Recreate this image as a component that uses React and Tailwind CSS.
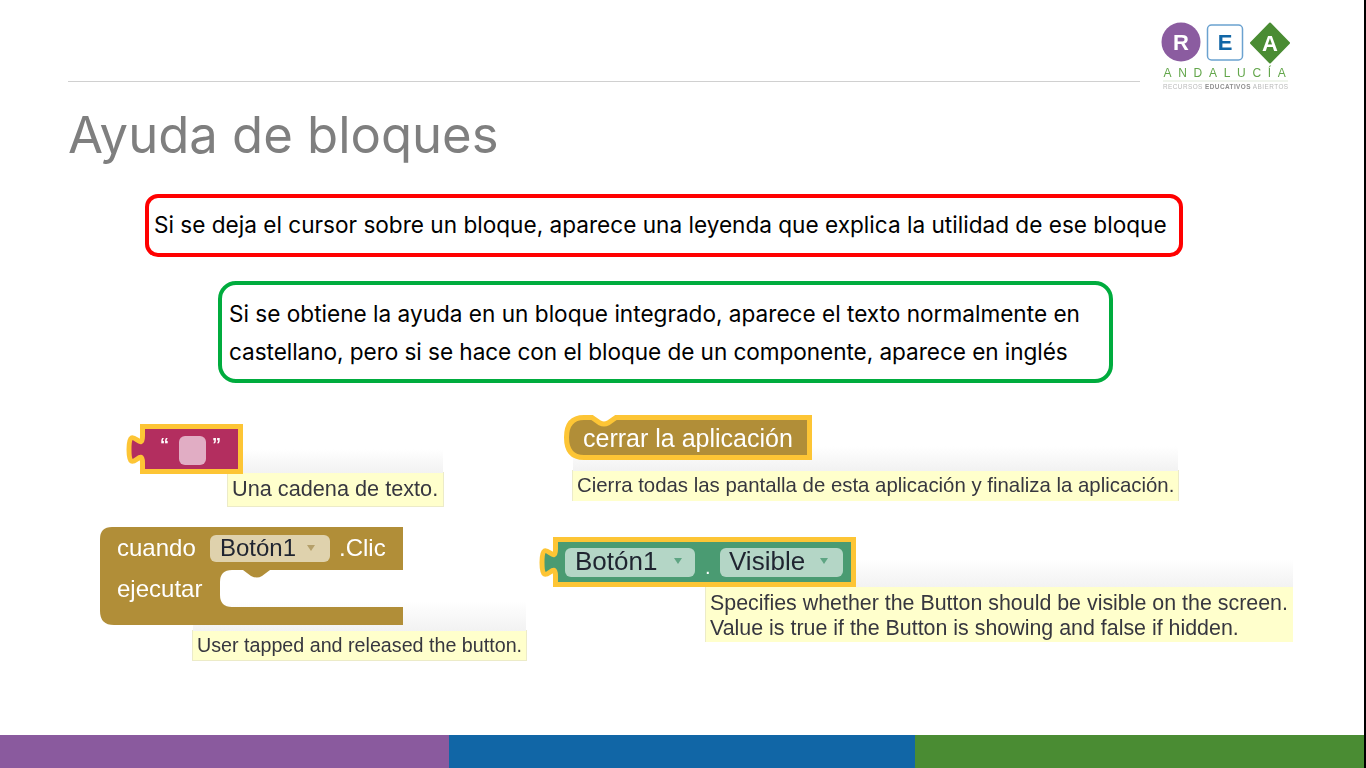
const ARIAL = { fontFamily: '"Liberation Sans", Arial, sans-serif' };

function Tooltip({ className, textClass, shadowClass, children }) {
  return (
    <div className={`relative font-['Liberation_Sans',sans-serif] bg-[#ffffcc] border border-[#ecebc8] text-[#37373f] whitespace-nowrap blur-[0.3px] ${className} ${textClass}`}>
      <div className={`absolute bottom-full bg-gradient-to-b from-white to-[#f2f2f2] ${shadowClass}`} />
      {children}
    </div>
  );
}

function Arrow({ x, y, fill }) {
  return <path d={`M${x - 4} ${y - 3} H${x + 4} L${x} ${y + 3} Z`} fill={fill} />;
}

function TextBlock() {
  return (
    <svg width="118" height="51" viewBox="0 0 118 51" className="relative z-10 block blur-[0.3px]">
      <path
        d="M16.5 2.5 H114.5 V47.5 H16.5 V39 c0,-18 -13.5,14.4 -13.5,-13.5 s13.5,4.5 13.5,-13.5 Z"
        fill="#b32e5f"
        stroke="#fdc535"
        strokeWidth="5"
      />
      <rect x="53" y="12" width="27" height="29" rx="6" fill="#e1adc4" />
      <text x="34" y="27" fontSize="18" fontWeight="700" fill="#fff" style={ARIAL}>“</text>
      <text x="86" y="27" fontSize="18" fontWeight="700" fill="#fff" style={ARIAL}>”</text>
    </svg>
  );
}

function EventBlock() {
  return (
    <svg width="303" height="98" viewBox="0 0 303 98" className="relative z-10 block blur-[0.3px]">
      <path
        d="M12 0 H303 V43 H170 L162 49 Q157 52 151 49 L143 43 H132 Q120 43 120 55 V68 Q120 80 132 80 H303 V98 H14 Q0 98 0 84 V12 Q0 0 12 0 Z"
        fill="#b18e38"
      />
      <rect x="110" y="8" width="120" height="27" rx="6" fill="#dfd2ad" />
      <g fontSize="24" style={ARIAL}>
        <text x="17" y="29" fill="#fff">cuando</text>
        <text x="120" y="29" fill="#1f2430">Botón1</text>
        <text x="239" y="29" fill="#fff">.Clic</text>
        <text x="17" y="70" fill="#fff">ejecutar</text>
      </g>
      <Arrow x={211} y={21} fill="#b5a06a" />
    </svg>
  );
}

function CloseBlock() {
  return (
    <svg width="248" height="46" viewBox="0 0 248 46" className="relative z-10 block blur-[0.3px]">
      <path
        d="M20 2.5 H28 L36 8 Q40 10 44 8 L52 2.5 H245.5 V42.5 H20 Q2.5 42.5 2.5 22.5 Q2.5 2.5 20 2.5 Z"
        fill="#b18e38"
        stroke="#fdc535"
        strokeWidth="5"
      />
      <text x="19" y="32" fontSize="25" fill="#fff" style={ARIAL}>cerrar la aplicación</text>
    </svg>
  );
}

function VisibleBlock() {
  return (
    <svg width="318" height="50" viewBox="0 0 318 50" className="relative z-10 block blur-[0.3px]">
      <path
        d="M17.5 2.5 H315.5 V47.5 H17.5 V39 c0,-18 -13.5,14.4 -13.5,-13.5 s13.5,4.5 13.5,-13.5 Z"
        fill="#4a9b72"
        stroke="#fdc535"
        strokeWidth="5"
      />
      <rect x="27" y="11" width="130" height="29" rx="6" fill="#b4d6c6" />
      <rect x="182" y="11" width="123" height="29" rx="6" fill="#b4d6c6" />
      <g fontSize="26" fill="#1f2430" style={ARIAL}>
        <text x="37" y="33">Botón1</text>
        <text x="191" y="33">Visible</text>
      </g>
      <text x="167" y="37" fontSize="20" fill="#fff" style={ARIAL}>.</text>
      <Arrow x={140} y={24} fill="#5ea583" />
      <Arrow x={286} y={24} fill="#5ea583" />
    </svg>
  );
}

function Logo() {
  return (
    <svg width="132" height="74" viewBox="0 0 132 74" className="block shrink-0 blur-[0.3px]" style={ARIAL}>
      <circle cx="21" cy="22" r="19.5" fill="#8b5ca0" />
      <text x="21" y="30" fontSize="22" fontWeight="700" fill="#fff" textAnchor="middle">R</text>
      <rect x="47.5" y="5" width="35" height="35" rx="4" fill="#fff" stroke="#6ba2d0" strokeWidth="1.5" />
      <text x="65" y="30" fontSize="22" fontWeight="700" fill="#1166a6" textAnchor="middle">E</text>
      <path d="M110 3.5 L129 23 L110 42.5 L91 23 Z" fill="#4a8c33" stroke="#4a8c33" strokeWidth="2" strokeLinejoin="round" />
      <text x="110" y="31" fontSize="22" fontWeight="700" fill="#fff" textAnchor="middle">A</text>
      <text x="3.5" y="57" fontSize="12" fill="#63a64b" letterSpacing="6.7">ANDALUCÍA</text>
      <rect x="3" y="60.5" width="125" height="1" fill="#dfeada" />
      <text x="3" y="69" fontSize="6.4" fill="#b9b9b9" letterSpacing="0.45">
        RECURSOS <tspan fontWeight="700" fill="#8f8f8f">EDUCATIVOS</tspan> ABIERTOS
      </text>
    </svg>
  );
}

export default function App() {
  return (
    <div className="flex w-[1366px] h-[768px] overflow-hidden bg-black">
      <div className="flex flex-col w-[1364px] h-full bg-white font-['Inter',sans-serif]">
        <header className="flex pl-[68px] h-[94px] shrink-0">
          <div className="w-[1072px] h-[82px] border-b border-[#d0d0d0]" />
          <div className="ml-[20px] mt-[20px]"><Logo /></div>
        </header>

        <h1 className="ml-[68px] mt-[11px] text-[50.8px] leading-[60px] text-[#7f7f7f]">Ayuda de bloques</h1>

        <div className="ml-[145px] mt-[29px] w-[1038px] h-[63px] flex items-center pl-[5px] pb-[2px] border-4 border-[#ff0000] rounded-[13px] text-[22.6px] text-black whitespace-nowrap">
          Si se deja el cursor sobre un bloque, aparece una leyenda que explica la utilidad de ese bloque
        </div>

        <div className="ml-[218px] mt-[24px] w-[895px] h-[102px] flex flex-col justify-center pl-[7px] pt-[1px] border-4 border-[#00ac3e] rounded-[18px] text-[22.6px] leading-[38px] text-black whitespace-nowrap">
          <p>Si se obtiene la ayuda en un bloque integrado, aparece el texto normalmente en</p>
          <p className="tracking-[-0.06px]">castellano, pero si se hace con el bloque de un componente, aparece en inglés</p>
        </div>

        <main className="flex mt-[32px] flex-1 min-h-0">
          <section className="w-[438px] ml-[100px] shrink-0">
            <div className="ml-[26px] mt-[9px]">
              <TextBlock />
              <Tooltip
                className="ml-[101px] -mt-[3px] w-[217px] h-[35px] pl-[4px] leading-[31px]"
                textClass="text-[21.7px]"
                shadowClass="left-0 right-0 h-[24px]"
              >
                Una cadena de texto.
              </Tooltip>
            </div>
            <div className="mt-[20px]">
              <EventBlock />
              <Tooltip
                className="ml-[92px] mt-[5px] w-[335px] h-[31px] pl-[4px] leading-[29px]"
                textClass="text-[19.7px]"
                shadowClass="left-0 right-0 h-[30px]"
              >
                User tapped and released the button.
              </Tooltip>
            </div>
          </section>

          <section className="shrink-0">
            <div className="ml-[26px]">
              <CloseBlock />
              <Tooltip
                className="ml-[8px] mt-[9px] w-[607px] h-[31px] pl-[4px] leading-[29px] border-b-0"
                textClass="text-[20.4px]"
                shadowClass="left-0 right-0 h-[25px]"
              >
                Cierra todas las pantalla de esta aplicación y finaliza la aplicación.
              </Tooltip>
            </div>
            <div className="mt-[36px]">
              <VisibleBlock />
              <Tooltip
                className="ml-[167px] -mt-[1px] w-[588px] h-[56px] pl-[4px] pt-[4px] leading-[25px] border-b-0 border-r-0"
                textClass="text-[21.4px]"
                shadowClass="left-0 right-0 h-[28px]"
              >
                <p>Specifies whether the Button should be visible on the screen.</p>
                <p>Value is true if the Button is showing and false if hidden.</p>
              </Tooltip>
            </div>
          </section>
        </main>

        <footer className="flex h-[33px] shrink-0">
          <div className="w-[449px] bg-[#8a5a9e]" />
          <div className="w-[466px] bg-[#1166a6]" />
          <div className="flex-1 bg-[#4a8c33]" />
        </footer>
      </div>
      <div className="flex-1" />
    </div>
  );
}
